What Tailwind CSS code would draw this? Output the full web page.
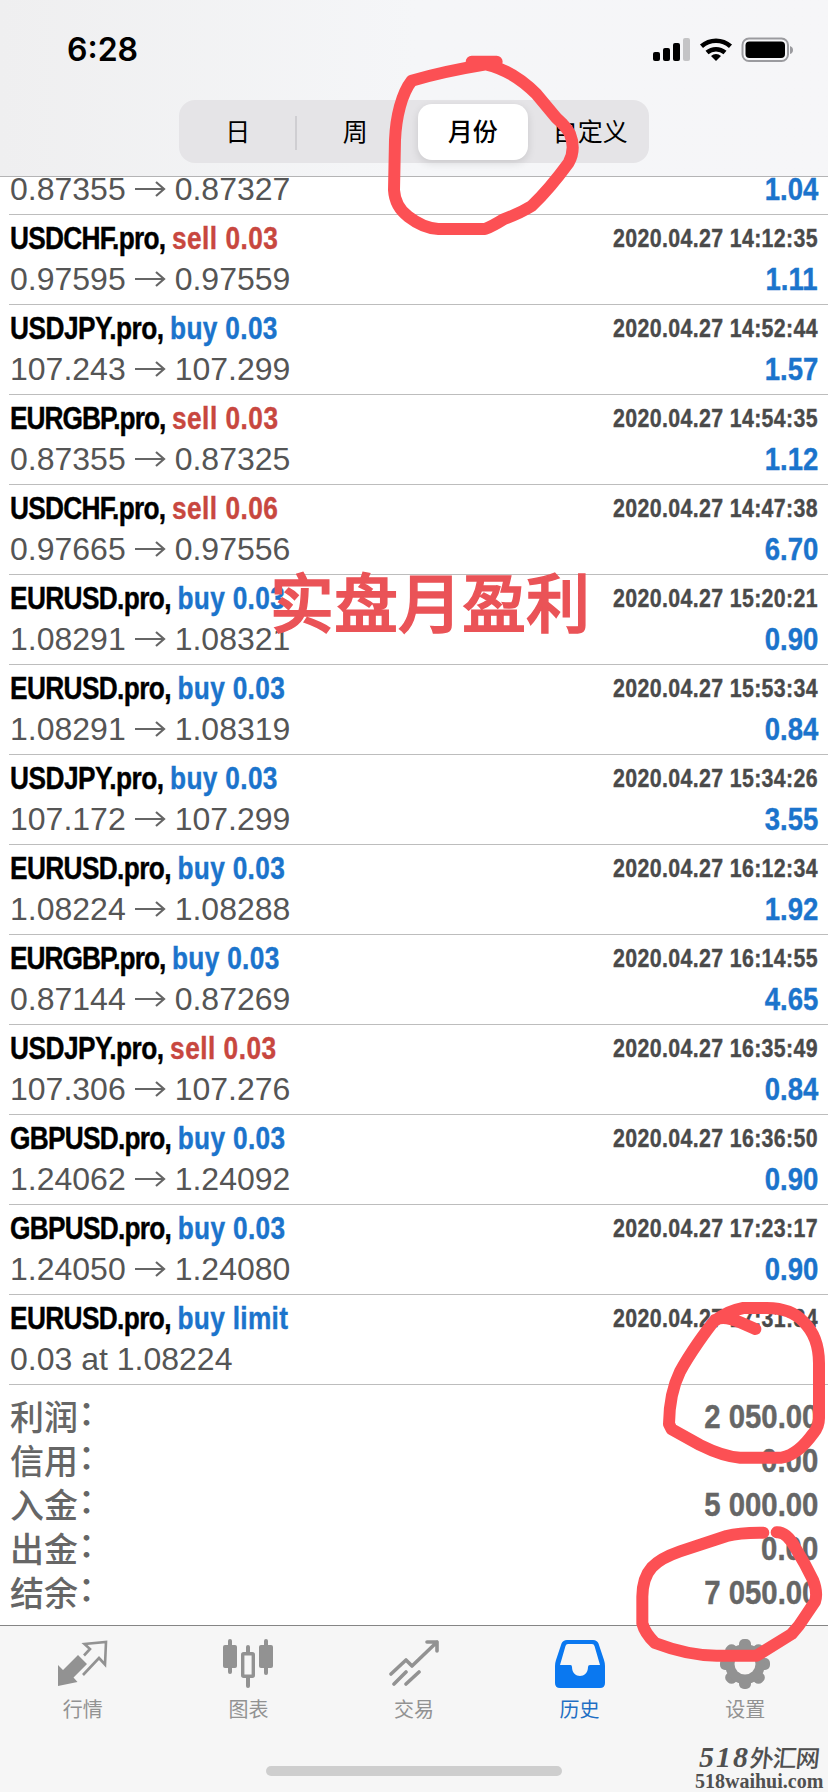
<!DOCTYPE html>
<html lang="zh-CN">
<head>
<meta charset="utf-8">
<title>历史</title>
<script src="https://cdn.jsdelivr.net/npm/@tailwindcss/browser@4"></script>
</head>
<body class="bg-white">
<div class="relative flex h-[1792px] w-[828px] flex-col overflow-hidden bg-white font-['Liberation_Sans','Noto_Sans_CJK_SC',sans-serif]">

  <header class="h-[177px] shrink-0 border-b border-[#b4b4b5] bg-linear-to-r from-[#efeff0] via-[#f5f6f8] to-[#f6f6f8]">
    <div class="flex h-[100px] justify-between pl-[67px] pr-[33px]">
      <div class="pt-[30px] font-['Inter',sans-serif] text-[32px] leading-10 font-semibold text-black">6:28</div>
      <svg class="mt-[36px] h-[28px] w-[143px]" viewBox="0 0 143 28">
        <rect x="1" y="16" width="7" height="9" rx="2"/><rect x="11" y="12" width="7" height="13" rx="2"/><rect x="21" y="7" width="7" height="18" rx="2"/><rect x="31" y="2" width="7" height="23" rx="2" fill="#c4c4c6"/>
        <g fill="none" stroke="#000" stroke-width="4.6"><path d="M49.500 10.200a22 22 0 0 1 29 0"/><path d="M55 16.600a14 14 0 0 1 18 0"/></g>
        <path d="M64 25l-5-5a7.500 7.500 0 0 1 10 0z"/>
        <rect x="90.500" y="2.500" width="45.500" height="22.500" rx="6.500" fill="none" stroke="#9b9b9f" stroke-width="2"/>
        <rect x="93.500" y="5.500" width="39.500" height="16.500" rx="4"/>
        <path d="M138 10v8q3-1 3-4t-3-4z" fill="#9b9b9f"/>
      </svg>
    </div>
    <div class="ml-[179px] grid h-[63px] w-[470px] grid-cols-4 items-center rounded-[16px] bg-[#e5e4e7] text-center font-['Noto_Sans_CJK_SC',sans-serif] text-[25px] leading-[53px] text-black">
      <div class="relative pb-[3px]">日<span class="absolute top-[12px] right-0 h-[34px] w-[2px] bg-[#cfced2]"></span></div>
      <div class="pb-[3px]">周</div>
      <div class="mx-[4px] rounded-[14px] bg-white pb-[3px] font-medium shadow-[0_3px_8px_rgba(0,0,0,0.12)]">月份</div>
      <div class="pb-[3px]">自定义</div>
    </div>
  </header>

  <main id="deals" class="h-[1207px] shrink-0 overflow-hidden pl-[9px]"></main>

  <section id="summary" class="ml-[9px] flex h-[241px] shrink-0 flex-col border-t border-[#bdbdbd] pt-[10px] pr-[10px] pl-px text-[#666]"></section>

  <footer class="h-[167px] shrink-0 border-t border-[#858585] bg-[#f6f6f6] pt-[13px]">
    <nav class="grid grid-cols-5 font-['Noto_Sans_CJK_SC',sans-serif] text-[20px] leading-[30px] text-[#929292]">
      <div class="flex flex-col items-center gap-[5px]">
        <svg class="h-[50px] w-[50px]" viewBox="0 0 50 50"><path d="M20 16l9 9-13.500 13.500 4 4.500L0 47V26l5 5z" fill="currentColor"/><path d="M26 16.500l6-6.500-5.500-5 21.500-2-1 22.500-6-6.500L25 36" fill="none" stroke="currentColor" stroke-width="2.600"/></svg>
        <div>行情</div>
      </div>
      <div class="flex flex-col items-center gap-[5px]">
        <svg class="h-[50px] w-[50px]" viewBox="0 0 50 50" fill="currentColor"><rect y="6" width="14" height="23" rx="2"/><rect x="5" width="4" height="35" rx="2"/><rect x="36" y="6" width="14" height="23" rx="2"/><rect x="41" width="4" height="36" rx="2"/><rect x="19.700" y="14.700" width="10.600" height="22.600" rx="1" fill="none" stroke="currentColor" stroke-width="3.400"/><rect x="23" y="6" width="4" height="9" rx="2"/><rect x="23" y="37" width="4" height="12" rx="2"/></svg>
        <div>图表</div>
      </div>
      <div class="flex flex-col items-center gap-[5px]">
        <svg class="h-[50px] w-[50px]" viewBox="0 0 50 50" fill="none" stroke="currentColor" stroke-width="3.600" stroke-linecap="round" stroke-linejoin="round"><path d="M2 35L17 21l6 6L48 3M38 3h10v9M5 45l12-12M17 45l13-12"/></svg>
        <div>交易</div>
      </div>
      <div class="flex flex-col items-center gap-[5px] text-[#0a78f0]">
        <svg class="h-[50px] w-[50px]" viewBox="0 0 50 50"><path fill="currentColor" fill-rule="evenodd" d="M12 1H38Q42 1 43.500 4.500L49 21Q50 24 50 27V44Q50 49 45 49H5Q0 49 0 44V27Q0 24 1 21L6.500 4.500Q8 1 12 1zM13 5Q11 5 10.500 7L5 26H15.500Q17 26 17 28C17 40 33 40 33 28Q33 26 35 26H45L39.500 7Q39 5 37 5z"/></svg>
        <div class="text-[#1f6fc4]">历史</div>
      </div>
      <div class="flex flex-col items-center gap-[5px]">
        <svg class="h-[50px] w-[50px]" viewBox="0 0 50 50" fill="currentColor"><rect x="19" width="12" height="50" rx="5"/><rect x="19" width="12" height="50" rx="5" transform="rotate(45 25 25)"/><rect x="19" width="12" height="50" rx="5" transform="rotate(90 25 25)"/><rect x="19" width="12" height="50" rx="5" transform="rotate(135 25 25)"/><circle cx="25" cy="25" r="20"/><circle cx="25" cy="25" r="10.500" fill="#f8f6f5"/></svg>
        <div>设置</div>
      </div>
    </nav>
    <div class="mt-[42px] ml-[266px] h-[10px] w-[296px] rounded-full bg-[#cecece]"></div>
  </footer>

  <div class="absolute top-[1742px] left-[695px] w-[130px] text-[#505050]">
    <div class="flex items-center pl-[4px] leading-[30px] font-bold italic"><span class="font-['Liberation_Serif',serif] text-[30px] tracking-[2px]">518</span><span class="-skew-x-6 font-['Noto_Sans_CJK_SC',sans-serif] text-[24px] font-medium tracking-[-1px] not-italic">外汇网</span></div>
    <div class="-mt-[2px] font-['Liberation_Serif',serif] text-[20px] leading-[22px] font-bold whitespace-nowrap">518waihui.com</div>
  </div>

  <div class="absolute top-[551px] left-[270px] font-['Noto_Sans_CJK_SC',sans-serif] text-[64px] leading-[96px] font-medium whitespace-nowrap text-[#ea5357] [-webkit-text-stroke:1.5px_#ea5357]">实盘月盈利</div>

  <svg class="pointer-events-none absolute inset-0 h-[1792px] w-[828px]" viewBox="0 0 828 1792" fill="none" stroke="#fc5054" stroke-width="36" stroke-linecap="round" stroke-linejoin="round">
    <path transform="translate(370 50) scale(.33333)" d="M305 35L380 35M348 43Q220 64 125 92C95 130 78 200 75 270L72 420Q75 470 115 500Q160 535 205 537H345Q370 527 400 508Q450 490 485 468Q540 415 596 338Q618 298 600 252Q590 232 560 205L500 133Q430 62 348 43"/>
    <g transform="translate(600 1280) scale(.33333)">
      <path d="M466 147L420 127Q370 105 345 120C320 150 270 220 240 275Q208 340 207 432L215 448L300 495Q370 530 420 533H545C580 527 615 495 640 460Q657 440 657 415V250Q657 170 610 125Q575 85 500 84H430Q385 92 345 122"/>
      <path d="M490 758Q420 757 380 768L240 814C165 840 128 870 127 950V1030Q135 1060 165 1089C220 1110 280 1127 350 1127H470L575 1062Q598 1038 618 1005L645 965Q654 938 639 900Q615 850 587 805Q560 755 530 757"/>
    </g>
  </svg>
</div>

<script>
const deals = [
  ["USDCHF", "sell 0.03", "0.97595", "0.97559", "14:12:35", "1.11"],
  ["USDJPY", "buy 0.03", "107.243", "107.299", "14:52:44", "1.57"],
  ["EURGBP", "sell 0.03", "0.87355", "0.87325", "14:54:35", "1.12"],
  ["USDCHF", "sell 0.06", "0.97665", "0.97556", "14:47:38", "6.70"],
  ["EURUSD", "buy 0.03", "1.08291", "1.08321", "15:20:21", "0.90"],
  ["EURUSD", "buy 0.03", "1.08291", "1.08319", "15:53:34", "0.84"],
  ["USDJPY", "buy 0.03", "107.172", "107.299", "15:34:26", "3.55"],
  ["EURUSD", "buy 0.03", "1.08224", "1.08288", "16:12:34", "1.92"],
  ["EURGBP", "buy 0.03", "0.87144", "0.87269", "16:14:55", "4.65"],
  ["USDJPY", "sell 0.03", "107.306", "107.276", "16:35:49", "0.84"],
  ["GBPUSD", "buy 0.03", "1.24062", "1.24092", "16:36:50", "0.90"],
  ["GBPUSD", "buy 0.03", "1.24050", "1.24080", "17:23:17", "0.90"],
  ["EURUSD", "buy limit", "0.03 at 1.08224", "", "17:31:34", ""],
];
const symbolTracking = {
  USDCHF: "tracking-[-0.880px]",
  USDJPY: "tracking-[-0.600px]",
  EURGBP: "tracking-[-1.150px]",
  EURUSD: "tracking-[-0.750px]",
  GBPUSD: "tracking-[-0.880px]",
};
const arrow = '<svg class="mx-[9px] h-[20px] w-[31px]" viewBox="0 0 31 20" fill="none" stroke="#666" stroke-width="2.200"><path d="M0 10H29M21 3l8 7-8 7"/></svg>';
const priceLine = (from, to, profit) => `
  <div class="flex h-[40px] items-center justify-between leading-[40px]">
    <div class="flex items-center text-[32px] text-[#555]"><span>${from}</span>${to ? arrow + `<span>${to}</span>` : ""}</div>
    <div class="origin-right scale-x-[0.86] text-[32px] font-bold text-[#1b74cc] [-webkit-text-stroke:0.4px]">${profit}</div>
  </div>`;
document.getElementById("deals").innerHTML =
  `<div class="-mt-[8px] h-[45px] pr-[10px] pl-px">${priceLine("0.87355", "0.87327", "1.04")}</div>` +
  deals.map(([sym, act, from, to, time, profit]) => `
  <div class="h-[90px] border-t border-[#bdbdbd] pt-[3px] pr-[10px] pl-px">
    <div class="flex h-[41px] justify-between leading-[40px] font-bold whitespace-nowrap [-webkit-text-stroke:0.4px]">
      <div class="flex origin-left scale-x-[0.82] text-[32px] text-black"><span class="mr-[8px] ${symbolTracking[sym]}">${sym}.pro,</span><span class="${act.startsWith("sell") ? "tracking-[0.600px] text-[#c8473f]" : "tracking-[0.400px] text-[#1b74cc]"}">${act}</span></div>
      <div class="origin-right scale-x-[0.82] text-[26px] tracking-[0.450px] text-[#4a4a4a]">2020.04.27 ${time}</div>
    </div>
    ${priceLine(from, to, profit)}
  </div>`).join("");
document.getElementById("summary").innerHTML =
  [["利润", "2 050.00"], ["信用", "0.00"], ["入金", "5 000.00"], ["出金", "0.00"], ["结余", "7 050.00"]].map(([k, v]) => `
  <div class="flex h-[44px] items-center justify-between leading-[44px]">
    <div class="-mt-[2px] font-['Noto_Sans_CJK_SC',sans-serif] text-[34px] font-medium">${k}<span class="relative -top-[5px]">：</span></div>
    <div class="origin-right scale-x-[0.89] text-[33px] font-bold [-webkit-text-stroke:0.4px]">${v}</div>
  </div>`).join("");
</script>
</body>
</html>
